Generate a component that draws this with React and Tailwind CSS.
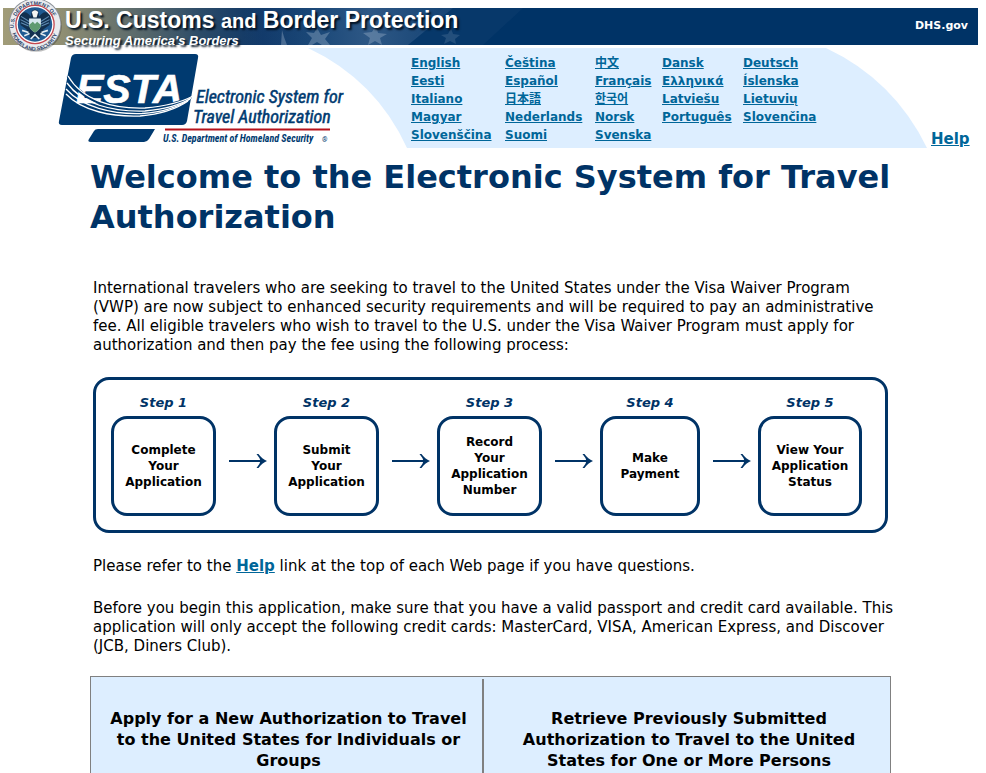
import React from "react";

const languageColumns = [
  { width: "w-[94px]", items: ["English", "Eesti", "Italiano", "Magyar", "Slovenščina"] },
  { width: "w-[90px]", items: ["Čeština", "Español", "日本語", "Nederlands", "Suomi"] },
  { width: "w-[67px]", items: ["中文", "Français", "한국어", "Norsk", "Svenska"] },
  { width: "w-[81px]", items: ["Dansk", "Ελληνικά", "Latviešu", "Português"] },
  { width: "w-[83px]", items: ["Deutsch", "Íslenska", "Lietuvių", "Slovenčina"] },
];

const steps = [
  { width: "w-[105px]", lines: ["Complete", "Your", "Application"] },
  { width: "w-[105px]", lines: ["Submit", "Your", "Application"] },
  { width: "w-[105px]", lines: ["Record", "Your", "Application", "Number"] },
  { width: "w-[100px]", lines: ["Make", "Payment"] },
  { width: "w-[104px]", lines: ["View Your", "Application", "Status"] },
];

function Lines({ lines }) {
  return lines.map((line) => (
    <span key={line} className="block whitespace-nowrap">
      {line}
    </span>
  ));
}

function Seal() {
  return (
    <svg className="absolute -top-[10px] left-[3px] h-[54px] w-[58px]" viewBox="0 0 54 50" aria-hidden="true">
      <defs>
        <path id="seal-top" d="M7.5 29 A19.5 19.5 0 1 1 46 29" />
        <path id="seal-bottom" d="M5 27 A21.8 21.8 0 0 0 48.6 27" />
      </defs>
      <circle cx="28" cy="26" r="24" fill="#000" opacity="0.25" />
      <circle cx="27" cy="24.5" r="24.5" fill="#8d9299" />
      <circle cx="27" cy="24.5" r="23.6" fill="#e9ebef" />
      <g fill="#2d4468" fontFamily="Liberation Sans, sans-serif" fontWeight="700" fontSize="5">
        <text>
          <textPath href="#seal-top" startOffset="1">U.S. DEPARTMENT OF</textPath>
        </text>
        <text>
          <textPath href="#seal-bottom" startOffset="6">HOMELAND SECURITY</textPath>
        </text>
      </g>
      <circle cx="27" cy="24.5" r="17.8" fill="#fff" stroke="#c4474f" strokeWidth="1.2" />
      <circle cx="27" cy="24.5" r="16" fill="#1f5a92" />
      <path d="M12.500 17 C16 11 20 13 23 17 L24 12 Q27 9 30 12 L31 17 C34 13 38 11 41.500 17 L40.500 25 L35 29 L31 37 L23 37 L19 29 L13.500 25 Z" fill="#12304f" />
      <path d="M14 17 l8 5 M13.5 20 l8 4 M14 23 l7 3 M40 17 l-8 5 M40.500 20 l-8 4 M40 23 l-7 3" stroke="#5f8cb4" strokeWidth="1" />
      <path d="M24 13 Q27 9.500 30 13 L28.500 18 L25.500 18 Z" fill="#f4f5f2" />
      <path d="M21.500 19 H32.500 V25 Q32 29.500 27 32 Q22 29.500 21.500 25 Z" fill="#d7e7ee" />
      <path d="M21.500 25 l3.500 -3 l2 2 l2 -2 l3.500 3 Q32 29.500 27 32 Q22 29.500 21.500 25" fill="#5f9a70" />
      <path d="M15 30 l6 2 M17 35 l5 -2 M39 30 l-6 2 M37 35 l-5 -2 M23 38 l4 -4 l4 4" stroke="#e4edf2" strokeWidth="1.500" fill="none" />
    </svg>
  );
}

function Banner() {
  return (
    <header className="relative flex h-[37px] items-center justify-between bg-[#003366] bg-[linear-gradient(90deg,#a19c78_0px,#8f8e73_60px,#5e6c6c_130px,#2a4a68_200px,#0c3566_260px,#003366_320px)] pr-2.5">
      <svg className="absolute top-0 left-0 h-full w-[520px]" viewBox="0 0 520 37" aria-hidden="true">
        <defs>
          <linearGradient id="flag" x1="0" x2="1">
            <stop offset="0" stopColor="#5c7ca4" stopOpacity="0" />
            <stop offset="0.6" stopColor="#5c7ca4" stopOpacity="0.5" />
            <stop offset="1" stopColor="#5c7ca4" stopOpacity="0.2" />
          </linearGradient>
        </defs>
        <path d="M240 0 H450 L405 37 H240 Z" fill="url(#flag)" />
        <path d="M405 37 L440 0 H520 L480 37 Z" fill="#2c5583" opacity="0.15" />
        <g fill="#a9bdd3" opacity="0.35">
          <path d="M314 20 l4 7 l9 -3 l-5 7 l5 6 h-8 l-5 -3 l-5 3 h-4 l4 -7 l-6 -6 l8 1 z" />
          <path d="M373 17 l2 8 l9 1 l-7 4 l2 7 l-7 -4 l-7 4 l2 -7 l-7 -5 l9 -1 z" />
          <path d="M279 22 l2 7 l3 8 h-6 z" />
          <path d="M448 20 l2 6 l7 1 l-5 4 l1 5 l-6 -3 l-6 3 l2 -6 l-5 -3 l7 -1 z" opacity="0.5" />
        </g>
      </svg>
      <Seal />
      <a
        href="#cbp"
        className="relative flex flex-col pl-[62px] font-['Liberation_Sans',Arial,sans-serif] font-bold whitespace-nowrap text-white [text-shadow:2px_2px_2px_#001020]"
      >
        <span className="text-[23px] leading-[22px]">
          U.S. Customs <span className="text-xl">and</span> Border Protection
        </span>
        <span className="text-[13px] leading-[12px] italic">Securing America&apos;s Borders</span>
      </a>
      <a href="#dhs" className="relative text-[11px] font-bold text-white">
        DHS.gov
      </a>
    </header>
  );
}

function Logo() {
  return (
    <svg
      className="ml-[56px] h-[100px] w-[249px] shrink-0 overflow-visible"
      viewBox="59 48 249 100"
      role="img"
      aria-label="ESTA Electronic System for Travel Authorization"
    >
      <path d="M76 54 H195 Q199 54 198 58 L187 121 Q186 125 182 125 H62 Q58 125 59 121 L71 58 Q72 54 76 54 Z" fill="#003a70" />
      <path d="M98 129 H155 L149 139 Q147 142 144 142 H91 Q87 142 89 139 L94 131 Q95 129 98 129 Z" fill="#003a70" />
      <g fontFamily="Liberation Sans, Arial, sans-serif" fontWeight="700" fontStyle="italic">
        <text x="76" y="103" fontSize="41" fill="#fff" stroke="#fff" strokeWidth="0.6">ESTA</text>
      </g>
      <g fill="none" stroke="#fff" strokeWidth="1.300">
        <path d="M68 76 C82 102 112 110 145 108 C168 106 182 102 191 97" stroke="#003a70" strokeWidth="3" />
        <path d="M68 76 C82 100 112 109 145 108 C168 106 182 102 193 96" />
        <path d="M67 83 C82 104 112 112 145 111 C168 109 182 104 191 98" />
        <path d="M66 89 C82 107 112 114.500 142 113.500 C165 112 180 106 190 99" />
        <path d="M66 94 C82 111 112 117 140 116 C163 114 178 108 188 101" />
      </g>
      <g
        fontFamily="Liberation Sans Narrow, Arial Narrow, Roboto Condensed, Liberation Sans, sans-serif"
        fontStyle="italic"
        fill="#003a70"
        stroke="#003a70"
      >
        <text x="196" y="103" fontSize="18" strokeWidth="0.5">Electronic System for</text>
        <text x="193" y="123" fontSize="18" strokeWidth="0.5">Travel Authorization</text>
        <text x="163" y="142" fontSize="10" fontWeight="700" strokeWidth="0">U.S. Department of Homeland Security</text>
        <text x="322" y="142" fontSize="7" strokeWidth="0">®</text>
      </g>
      <path d="M165 129.500 H330" stroke="#b5121b" strokeWidth="2" />
    </svg>
  );
}

function Languages() {
  return (
    <nav aria-label="Languages" className="flex h-[100px] flex-1">
      <svg className="h-[100px] w-[100px] shrink-0" viewBox="0 0 100 100" aria-hidden="true">
        <path d="M0 0 Q68 32 99 100 H100 V0 Z" fill="#ddeeff" />
      </svg>
      <div className="flex flex-1 bg-[#ddeeff] pt-[6px] pl-[3px]">
        {languageColumns.map((column) => (
          <ul key={column.items[0]} className={column.width}>
            {column.items.map((name) => (
              <li key={name} className="h-[18px] text-xs leading-[18px] font-bold whitespace-nowrap">
                <a href="#language" className="text-[#006699] underline">
                  {name}
                </a>
              </li>
            ))}
          </ul>
        ))}
      </div>
      <svg className="h-[100px] w-[101px] shrink-0" viewBox="0 0 101 100" aria-hidden="true">
        <path d="M0 0 Q68 32 101 100 H0 Z" fill="#ddeeff" />
      </svg>
    </nav>
  );
}

function Arrow() {
  return (
    <svg className="mt-[60px] ml-[13px] mr-[7px] h-[14px] w-[38px] shrink-0" viewBox="0 0 38 14" aria-hidden="true">
      <path d="M0 7 H34" stroke="#003366" strokeWidth="2" />
      <path d="M27.500 0 H29.500 Q33 5 38 7 Q33 9 29.500 14 H27.500 Q31 10 31.500 7 Q31 4 27.500 0 Z" fill="#003366" />
    </svg>
  );
}

export default function App() {
  return (
    <div className="flex h-screen flex-col overflow-hidden bg-white pt-2 pr-2 pl-[3px] font-['DejaVu_Sans',Verdana,'Noto_Sans_CJK_JP','Noto_Sans_CJK_KR',sans-serif] text-[15px] text-black">
      <Banner />
      <div className="mt-[3px] flex">
        <Logo />
        <Languages />
        <a href="#help" className="mr-2.5 ml-1 self-end text-[15px] leading-[18px] font-bold text-[#006699] underline">
          Help
        </a>
      </div>

      <main className="mr-[87px] ml-[87px] flex flex-1 flex-col">
        <h1 className="mt-[9px] text-[32px] leading-10 font-bold whitespace-nowrap text-[#003366]">
          <Lines lines={["Welcome to the Electronic System for Travel", "Authorization"]} />
        </h1>

        <div className="mx-[3px]">
          <p className="mt-[42px] leading-[19px]">
            <Lines
              lines={[
                "International travelers who are seeking to travel to the United States under the Visa Waiver Program",
                "(VWP) are now subject to enhanced security requirements and will be required to pay an administrative",
                "fee. All eligible travelers who wish to travel to the U.S. under the Visa Waiver Program must apply for",
                "authorization and then pay the fee using the following process:",
              ]}
            />
          </p>

          <ol className="mt-[22px] flex h-[156px] rounded-[16px] border-[3px] border-[#003366] pt-[14px] pl-[15px]">
            {steps.map((step, index) => (
              <li key={index} className="flex">
                <div className={step.width}>
                  <h2 className="text-center text-[13px] leading-[18px] font-bold text-[#003366] italic">
                    Step {index + 1}
                  </h2>
                  <p className="mt-1 flex h-[100px] flex-col justify-center rounded-[16px] border-[3px] border-[#003366] text-center text-xs leading-4 font-bold">
                    <Lines lines={step.lines} />
                  </p>
                </div>
                {index < steps.length - 1 && <Arrow />}
              </li>
            ))}
          </ol>

          <p className="mt-6 leading-[19px]">
            Please refer to the{" "}
            <a href="#help" className="font-bold text-[#006699] underline">
              Help
            </a>{" "}
            link at the top of each Web page if you have questions.
          </p>
          <p className="mt-[23px] leading-[19px]">
            <Lines
              lines={[
                "Before you begin this application, make sure that you have a valid passport and credit card available. This",
                "application will only accept the following credit cards: MasterCard, VISA, American Express, and Discover",
                "(JCB, Diners Club).",
              ]}
            />
          </p>
        </div>

        <div className="mt-5 flex flex-1 border-x border-t border-[#808080] bg-[#ddeeff] pt-0.5 text-center text-base leading-[21px] font-bold">
          <h2 className="w-[393px] border-r-2 border-[#808080] pt-[29px] pl-1">
            <Lines
              lines={["Apply for a New Authorization to Travel", "to the United States for Individuals or", "Groups"]}
            />
          </h2>
          <h2 className="flex-1 pt-[29px] pl-1">
            <Lines
              lines={["Retrieve Previously Submitted", "Authorization to Travel to the United", "States for One or More Persons"]}
            />
          </h2>
        </div>
      </main>
    </div>
  );
}
